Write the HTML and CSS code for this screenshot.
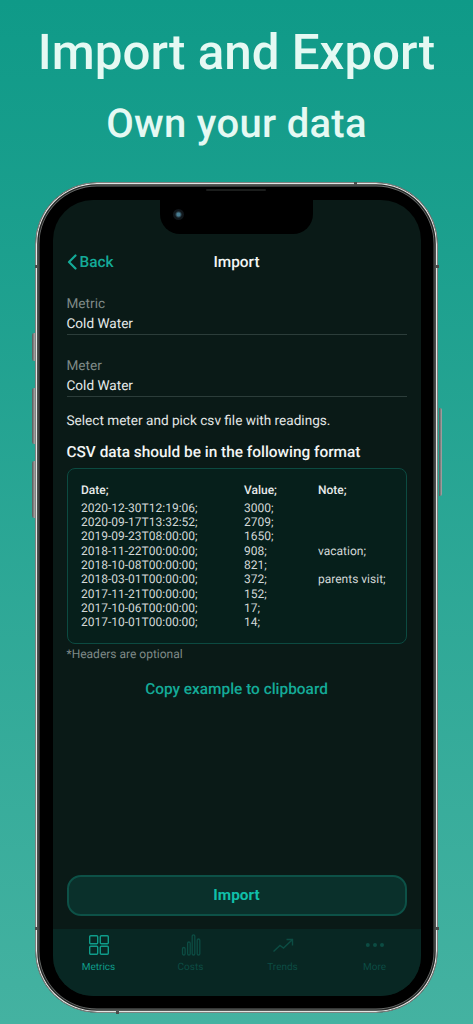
FILE: index.html
```html
<!DOCTYPE html>
<html lang="en">
<head>
  <meta charset="UTF-8" />
  <meta name="viewport" content="width=device-width, initial-scale=1" />
  <title>Import and Export</title>
  <link rel="stylesheet" href="styles.css">
</head>
<body>
  <h1 class="headline">Import and Export</h1>
  <p class="subline">Own your data</p>

  <div class="phone">
    <span class="side-btn left one"></span>
    <span class="side-btn left two"></span>
    <span class="side-btn left three"></span>
    <span class="side-btn right"></span>

    <span class="band band-left top"></span>
    <span class="band band-right top"></span>
    <span class="band band-left low"></span>
    <span class="band band-right low"></span>
    <span class="band band-h upper"></span>
    <span class="band band-h lower"></span>

    <span class="speaker"></span>

    <div class="screen">
      <div class="notch"><span class="camera"></span></div>

      <div class="content">
        <div class="navbar">
          <a class="back">
            <svg width="10" height="16" viewBox="0 0 10 16"><path d="M8.5 1.5 2 8l6.5 6.5" fill="none" stroke="#14ab98" stroke-width="2.2" stroke-linecap="round" stroke-linejoin="round"/></svg>
            Back
          </a>
          <div class="nav-title">Import</div>
        </div>

        <div class="field first">
          <div class="field-label">Metric</div>
          <div class="field-value">Cold Water</div>
        </div>
        <div class="field">
          <div class="field-label">Meter</div>
          <div class="field-value">Cold Water</div>
        </div>

        <p class="hint">Select meter and pick csv file with readings.</p>
        <h2 class="format-title">CSV data should be in the following format</h2>

        <div class="csv-box">
          <div class="csv-row head"><span>Date;</span><span>Value;</span><span>Note;</span></div>
          <div class="csv-row"><span>2020-12-30T12:19:06;</span><span>3000;</span><span></span></div>
          <div class="csv-row"><span>2020-09-17T13:32:52;</span><span>2709;</span><span></span></div>
          <div class="csv-row"><span>2019-09-23T08:00:00;</span><span>1650;</span><span></span></div>
          <div class="csv-row"><span>2018-11-22T00:00:00;</span><span>908;</span><span>vacation;</span></div>
          <div class="csv-row"><span>2018-10-08T00:00:00;</span><span>821;</span><span></span></div>
          <div class="csv-row"><span>2018-03-01T00:00:00;</span><span>372;</span><span>parents visit;</span></div>
          <div class="csv-row"><span>2017-11-21T00:00:00;</span><span>152;</span><span></span></div>
          <div class="csv-row"><span>2017-10-06T00:00:00;</span><span>17;</span><span></span></div>
          <div class="csv-row"><span>2017-10-01T00:00:00;</span><span>14;</span><span></span></div>
        </div>

        <p class="note">*Headers are optional</p>
        <a class="copy-link">Copy example to clipboard</a>

        <button class="import-btn">Import</button>
      </div>

      <nav class="tabbar">
        <div class="tab active">
          <svg width="22" height="22" viewBox="0 0 22 22" fill="none" stroke="currentColor" stroke-width="1.4"><rect x="1.7" y="1.7" width="8" height="8" rx="1"/><rect x="12.3" y="1.7" width="8" height="8" rx="1"/><rect x="1.7" y="12.3" width="8" height="8" rx="1"/><rect x="12.3" y="12.3" width="8" height="8" rx="1"/></svg>
          <span>Metrics</span>
        </div>
        <div class="tab">
          <svg width="22" height="22" viewBox="0 0 22 22" fill="none" stroke="currentColor" stroke-width="1.3"><rect x="2.5" y="13.5" width="2.6" height="7.5" rx="1.3"/><rect x="7.6" y="8" width="2.6" height="13" rx="1.3"/><rect x="12.2" y="0.8" width="2.6" height="20.2" rx="1.3"/><rect x="17.2" y="5" width="2.6" height="16" rx="1.3"/></svg>
          <span>Costs</span>
        </div>
        <div class="tab">
          <svg width="22" height="22" viewBox="0 0 22 22" fill="none" stroke="currentColor" stroke-width="1.4"><path d="M1.5 17.5 8 11.5l3.5 2.5L20 6M14.5 5.5h6V11.5"/></svg>
          <span>Trends</span>
        </div>
        <div class="tab">
          <svg width="22" height="22" viewBox="0 0 22 22" fill="currentColor" stroke="none"><circle cx="3.8" cy="11" r="2"/><circle cx="11" cy="11" r="2"/><circle cx="18" cy="11" r="2"/></svg>
          <span>More</span>
        </div>
      </nav>
    </div>
  </div>
</body>
</html>
```

FILE: styles.css
```css
* {
  box-sizing: border-box;
}

body {
  margin: 0;
  height: 1024px;
  overflow: hidden;
  background: linear-gradient(180deg, #0f9a88 0%, #44b2a1 100%);
  font-family: Roboto, "Liberation Sans", sans-serif;
  text-rendering: geometricPrecision;
  color: #fff;
  padding-top: 25px;
}

.headline {
  margin: 0;
  font-size: 49.3px;
  line-height: 56px;
  font-weight: 500;
  text-align: center;
  color: #e5f9f3;
}

.subline {
  margin: 19px 0 0;
  font-size: 40px;
  line-height: 48px;
  font-weight: 500;
  letter-spacing: 0.3px;
  text-align: center;
  color: #e5f9f3;
}

.phone {
  position: relative;
  width: 403px;
  height: 831px;
  margin: 34px 0 0 35px;
  padding: 16.5px;
  background: #000;
  border-radius: 62px;
  border: 1.5px solid #7d8280;
  box-shadow: inset 0 0 0 1.2px #e2e5e3, inset 0 0 0 2.6px #262827, inset 0 0 0 3.4px #6b6e6d;
}

.side-btn {
  position: absolute;
  width: 3px;
  background: linear-gradient(90deg, #555, #aaa);
}
.side-btn.left { left: -4.5px; border-radius: 2px 0 0 2px; }
.side-btn.one { top: 150px; height: 28px; }
.side-btn.two { top: 205px; height: 56px; }
.side-btn.three { top: 278px; height: 57px; }
.side-btn.right { right: -4.5px; top: 225px; height: 88px; border-radius: 0 2px 2px 0; }

.band {
  position: absolute;
  width: 3px;
  height: 3px;
  background: #4a4c4b;
}
.band-left { left: -1.5px; }
.band-right { right: -1.5px; }
.band.top { top: 82px; }
.band.low { top: 744px; }
.band-h.upper { top: -1.5px; left: 318px; }
.band-h.lower { bottom: -1.5px; left: 80px; }

.speaker {
  position: absolute;
  top: 6px;
  left: 170px;
  width: 60px;
  height: 2px;
  background: #1b1d1c;
  border-radius: 1px;
}

.screen {
  position: relative;
  height: 100%;
  background: #0a1a17;
  border-radius: 40px;
  overflow: hidden;
  display: flex;
  flex-direction: column;
}

.notch {
  position: absolute;
  top: 0;
  left: 107px;
  width: 153px;
  height: 34px;
  background: #000;
  border-radius: 0 0 20px 20px;
}

.camera {
  position: absolute;
  top: 9.5px;
  left: 13.5px;
  width: 11px;
  height: 11px;
  border-radius: 50%;
  background: radial-gradient(circle, #4a7d92 0 18%, #12181c 45%, #0c1013 100%);
}

.content {
  flex: 1;
  display: flex;
  flex-direction: column;
  padding: 0 14px;
}

.navbar {
  position: relative;
  margin-top: 51px;
  height: 22px;
  text-align: center;
}

.back {
  position: absolute;
  left: 0;
  top: 0;
  display: flex;
  align-items: center;
  gap: 3px;
  font-size: 15.4px;
  line-height: 22px;
  font-weight: 500;
  color: #14ab98;
}

.nav-title {
  font-size: 15.4px;
  line-height: 22px;
  font-weight: 500;
  color: #f2f5f4;
}

.field {
  margin-top: 21px;
  height: 41px;
  border-bottom: 1px solid #2c3d3a;
}

.field.first {
  margin-top: 21px;
}

.field-label {
  font-size: 13.6px;
  line-height: 20px;
  color: #7f8a88;
}

.field-value {
  font-size: 13.6px;
  line-height: 20px;
  color: #e6eaea;
}

.hint {
  margin: 15px 0 0;
  font-size: 13.6px;
  line-height: 18px;
  color: #e3e7e6;
}

.format-title {
  margin: 12px 0 0;
  font-size: 15.4px;
  line-height: 20px;
  font-weight: 500;
  color: #f2f5f4;
}

.csv-box {
  margin-top: 6px;
  height: 176px;
  padding: 14px 13.5px 0;
  background: #061f1b;
  border: 1px solid #0c4a41;
  border-radius: 8px;
}

.csv-row {
  display: grid;
  grid-template-columns: 163px 74px 1fr;
  font-size: 12px;
  line-height: 14.3px;
  color: #d3d8d7;
}

.csv-row.head {
  font-weight: 500;
  color: #e6eaea;
  margin-bottom: 4px;
}

.note {
  margin: 2px 0 0;
  font-size: 12px;
  line-height: 16px;
  color: #7f8a88;
}

.copy-link {
  margin-top: 17px;
  font-size: 15.4px;
  line-height: 20px;
  font-weight: 500;
  text-align: center;
  color: #14ab98;
}

.import-btn {
  margin-top: auto;
  margin-bottom: 13px;
  height: 41px;
  background: #0a302b;
  border: 2px solid #0d5147;
  border-radius: 14px;
  font-family: inherit;
  font-size: 15.4px;
  font-weight: 700;
  color: #10bfa8;
}

.tabbar {
  height: 67px;
  display: grid;
  grid-template-columns: repeat(4, 1fr);
  background: #082723;
  padding-top: 5px;
}

.tab {
  display: flex;
  flex-direction: column;
  align-items: center;
  gap: 6px;
  font-size: 10px;
  line-height: 12px;
  color: #0c4c43;
}

.tab.active {
  color: #0f9c8a;
}
```
